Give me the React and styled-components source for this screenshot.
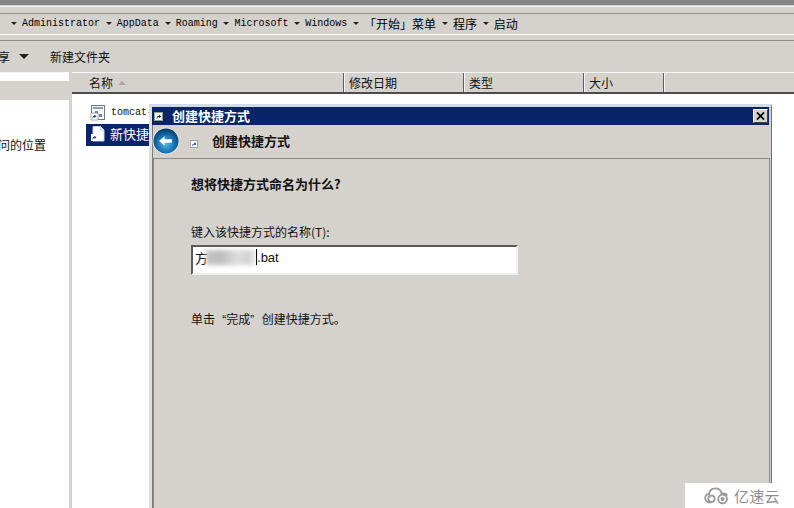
import React from 'react'
import styled, { createGlobalStyle } from 'styled-components'

const cjk = `"Noto Sans CJK SC", "Liberation Sans", sans-serif`
const face = '#d5d2cd'

const Global = createGlobalStyle`
  html, body { margin: 0; padding: 0; background: #fff; }
  * { box-sizing: border-box; }
`

const Page = styled.div`
  position: relative;
  width: 794px;
  height: 508px;
  overflow: hidden;
  display: flex;
  flex-direction: column;
  background: ${face};
  font-family: ${cjk};
  font-size: 12px;
  color: #111;
`

const TitleStrip = styled.div`
  height: 14px;
  flex: none;
  background: ${face};
  border-top: 5px solid #858585;
  border-bottom: 1px solid #8f8f8f;
  box-shadow: inset 0 1px 0 ${face}, inset 0 2px 0 #f4f4f4;
`

const AddressBar = styled.div`
  height: 21px;
  flex: none;
  display: flex;
  align-items: center;
  padding: 0 0 2px 11px;
  border-bottom: 1px solid #fbfbfb;
`

const Crumb = styled.span`
  font-family: ${p => (p.$cjk ? cjk : '"Liberation Mono", monospace')};
  font-size: ${p => (p.$cjk ? '12px' : '10px')};
  font-weight: 400;
  color: #000;
  white-space: nowrap;
  margin-right: 5.8px;
`

const Caret = styled.i`
  width: 0;
  height: 0;
  flex: none;
  margin-right: ${p => p.$after || 5}px;
  border-style: solid;
  border-width: ${p => (p.$big ? '5px 5px 0' : '3px 3px 0')};
  border-color: #222 transparent transparent;
`

const Toolbar = styled.div`
  height: 32px;
  flex: none;
  display: flex;
  align-items: center;
  margin-top: 5px;
  border-top: 1px solid #8f8f8f;
  font-size: 12px;
`

const ShareLabel = styled.span`
  margin-left: -2px;
  margin-right: 9px;
`

const Body = styled.div`
  flex: 1;
  display: flex;
  min-height: 0;
`

const LeftPane = styled.div`
  width: 69px;
  flex: none;
  display: flex;
  flex-direction: column;
  background: #fff;
  border-top: 1px solid #f7f7f7;
  overflow: hidden;
`

const LeftGap = styled.div`
  height: 8px;
  flex: none;
`

const LeftBand = styled.div`
  height: 19px;
  flex: none;
  background: ${face};
`

const LeftText = styled.div`
  margin: 36px 0 0 -14px;
  font-size: 12px;
  line-height: 18px;
  white-space: nowrap;
`

const RightPane = styled.div`
  flex: 1;
  margin-left: 3px;
  display: flex;
  flex-direction: column;
  background: #fff;
`

const HeaderRow = styled.div`
  height: 22px;
  flex: none;
  display: flex;
  background: ${face};
  border-top: 1px solid #f7f7f7;
  border-bottom: 2px solid #4c4c4c;
`

const HeaderCell = styled.div`
  width: ${p => p.$w}px;
  flex: none;
  display: flex;
  align-items: center;
  gap: 5px;
  padding-left: ${p => p.$pad || 5}px;
  border-right: 1px solid #5f5f5f;
  box-shadow: 1px 0 0 #f5f5f5;
  font-size: 12px;
`

const SortMark = styled.i`
  width: 0;
  height: 0;
  border-style: solid;
  border-width: 0 4px 4px;
  border-color: transparent transparent #a8a8a8;
`

const FileList = styled.div`
  padding: 9px 0 0 14px;
  display: flex;
  flex-direction: column;
  gap: 2px;
`

const FileRow = styled.div`
  height: ${p => (p.$selected ? 22 : 19)}px;
  display: flex;
  align-items: center;
  gap: ${p => (p.$selected ? 4 : 5)}px;
  padding: ${p => (p.$selected ? '0 0 3px 4px' : '0 0 0 4px')};
  white-space: nowrap;
  overflow: hidden;
  width: 70px;
  color: ${p => (p.$selected ? '#fff' : '#111')};
  background: ${p => (p.$selected ? '#0a246a' : 'transparent')};
  font-family: ${p => (p.$selected ? cjk : '"Liberation Mono", monospace')};
  font-size: ${p => (p.$selected ? 13 : 10)}px;

  svg {
    flex: none;
  }
`

const Dialog = styled.div`
  position: absolute;
  left: 149px;
  top: 104px;
  width: 623px;
  height: 420px;
  display: flex;
  flex-direction: column;
  background: ${face};
  border-style: solid;
  border-width: 3px 1px 0 3px;
  border-color: #d3dbe8 #6e6e6e #6e6e6e #dedede;
  box-shadow: inset 1px 0 0 #7c7c7c;
`

const DialogTitle = styled.div`
  height: 18px;
  flex: none;
  margin: 0 2px 0 0;
  display: flex;
  align-items: center;
  padding: 0 1px 0 2px;
  background: #0a246a;
  color: #fff;
  font-size: 13px;
  font-weight: 700;
`

const TitleText = styled.span`
  margin: 0 0 2px 9px;
  flex: 1;
`

const CloseButton = styled.button`
  width: 15px;
  height: 14px;
  padding: 0;
  display: flex;
  align-items: center;
  justify-content: center;
  background: ${face};
  border: 1px solid;
  border-color: #fff #404040 #404040 #fff;
`

const WizardHead = styled.div`
  height: 33px;
  flex: none;
  display: flex;
  align-items: center;
  padding-bottom: 2px;
  font-size: 13px;
  font-weight: 700;
`

const HeadText = styled.span`
  margin-left: 14px;
`

const SmallShortcut = styled.span`
  display: flex;
  margin-left: 10px;
  margin-top: 6px;
`

const Panel = styled.div`
  flex: 1;
  margin: 0 1px 0 1px;
  padding: 15px 0 0 37px;
  border-top: 1px solid #8a8a8a;
  border-left: 1px solid #8a8a8a;
  border-right: 1px solid #8a8a8a;
`

const Question = styled.div`
  font-size: 13px;
  font-weight: 700;
  line-height: 19px;
`

const NameLabel = styled.div`
  margin-top: 29px;
  font-size: 12px;
  line-height: 19px;
`

const NameInput = styled.div`
  width: 327px;
  height: 30px;
  margin-top: 4px;
  display: flex;
  align-items: center;
  padding: 0 0 6px 2px;
  background: #fff;
  border-style: solid;
  border-width: 2px;
  border-color: #5a5a5a #efefef #efefef #5a5a5a;
  font-family: "Liberation Sans", ${cjk};
  font-size: 13px;
  color: #111;
`

const Smudge = styled.span`
  width: 50px;
  height: 15px;
  flex: none;
  margin-left: -2px;
  background: linear-gradient(90deg, #c4c4c4 0%, #bdbdbd 30%, #dddddd 62%, #d2d2d2 85%, #eeeeee 100%);
  filter: blur(2px);
`

const InputCaret = styled.span`
  position: relative;
  z-index: 1;
  width: 1px;
  height: 16px;
  flex: none;
  background: #000;
`

const FinishHint = styled.div`
  margin-top: 36px;
  font-family: "Liberation Sans", ${cjk};
  font-size: 12px;
  line-height: 19px;
  word-spacing: 4px;
`

const Watermark = styled.div`
  position: absolute;
  right: 0;
  bottom: 0;
  width: 109px;
  height: 25px;
  display: flex;
  align-items: center;
  padding-left: 19px;
  gap: 4px;
  background: #fff;
  color: #8f8f8f;
  font-size: 15px;
  letter-spacing: 0.3px;
`

const BackBall = () => (
  <svg width="28" height="28" viewBox="0 0 28 28">
    <defs>
      <radialGradient id="ball" cx="50%" cy="62%" r="62%">
        <stop offset="0" stopColor="#58b6e6" />
        <stop offset="0.55" stopColor="#1573b6" />
        <stop offset="1" stopColor="#0a3760" />
      </radialGradient>
    </defs>
    <circle cx="14" cy="14" r="13.5" fill="#dfe6ea" />
    <circle cx="14" cy="14" r="12.5" fill="url(#ball)" />
    <path d="M7 14 L12.6 9.2 V12.2 H20 V15.8 H12.6 V18.8 Z" fill="#fff" />
  </svg>
)

const ShortcutBadge = ({ size = 9 }) => (
  <svg width={size} height={size} viewBox="0 0 9 9">
    <rect width="9" height="9" fill="#fff" />
    <rect x="0.5" y="0.5" width="8" height="8" fill="none" stroke="#9a9a9a" />
    <path d="M2.5 7 C2.5 4.5 3.5 3.8 5 3.8 V2.4 L7.4 4.4 L5 6.2 V5 C4 5 3.2 5.6 2.8 7 Z" fill="#12408e" />
  </svg>
)

const BatIcon = () => (
  <svg width="16" height="16" viewBox="0 0 16 16">
    <rect x="1.5" y="0.5" width="13" height="14" fill="#f4f6f8" stroke="#6d7a86" />
    <rect x="3" y="2" width="10" height="2" fill="#8aa0b4" />
    <path d="M5 6 h3 v3 h-3 z M9 9 h3 v3 h-3 z" fill="#7a8894" />
    <rect x="1" y="8" width="7" height="7" fill="#fff" stroke="#777" strokeWidth="0.6" />
    <path d="M2.5 13.5 C2.5 11.4 3.2 10.8 4.4 10.8 V9.7 L6.5 11.3 L4.4 12.9 V12 C3.6 12 3 12.5 2.8 13.5 Z" fill="#12408e" />
  </svg>
)

const NewFileIcon = () => (
  <svg width="16" height="16" viewBox="0 0 16 16">
    <path d="M3 0.5 H10.5 L14 4 V15 H3 Z" fill="#fff" stroke="#c8d2de" />
    <path d="M10.5 0.5 V4 H14" fill="#e6ebf2" stroke="#c8d2de" />
    <rect x="1" y="8" width="7" height="7" fill="#fff" />
    <path d="M2.5 13.5 C2.5 11.4 3.2 10.8 4.4 10.8 V9.7 L6.5 11.3 L4.4 12.9 V12 C3.6 12 3 12.5 2.8 13.5 Z" fill="#12408e" />
  </svg>
)

const CloudLogo = () => (
  <svg width="26" height="18" viewBox="0 0 26 18" fill="none" stroke="#979797" strokeWidth="1.8">
    <path d="M7 15.5 H6 C3 15.5 1.2 13.4 1.2 11 C1.2 8.6 3 7 5 7 C5.6 3.6 8.2 1.4 11.2 1.4 C14.4 1.4 17 3.6 17.6 6.6 C20 6 22 6.6 23.4 8.4" />
    <circle cx="7.5" cy="11.8" r="3.2" />
    <circle cx="18.6" cy="12" r="4.4" />
    <circle cx="18.6" cy="12" r="1.2" />
  </svg>
)

const crumbs = [
  { text: 'Administrator' },
  { text: 'AppData' },
  { text: 'Roaming' },
  { text: 'Microsoft' },
  { text: 'Windows' },
  { text: '「开始」菜单', cjk: true },
  { text: '程序', cjk: true },
  { text: '启动', cjk: true },
]

export default function App() {
  return (
    <Page>
      <Global />
      <TitleStrip />
      <AddressBar>
        {crumbs.map(c => (
          <React.Fragment key={c.text}>
            <Caret $after={5} />
            <Crumb $cjk={c.cjk}>{c.text}</Crumb>
          </React.Fragment>
        ))}
      </AddressBar>
      <Toolbar>
        <ShareLabel>享</ShareLabel>
        <Caret $big $after={21} />
        <span>新建文件夹</span>
      </Toolbar>
      <Body>
        <LeftPane>
          <LeftGap />
          <LeftBand />
          <LeftText>访问的位置</LeftText>
        </LeftPane>
        <RightPane>
          <HeaderRow>
            <HeaderCell $w={272} $pad={17}>名称<SortMark /></HeaderCell>
            <HeaderCell $w={120}>修改日期</HeaderCell>
            <HeaderCell $w={120}>类型</HeaderCell>
            <HeaderCell $w={80}>大小</HeaderCell>
          </HeaderRow>
          <FileList>
            <FileRow><BatIcon />tomcat-</FileRow>
            <FileRow $selected><NewFileIcon />新快捷方式</FileRow>
          </FileList>
        </RightPane>
      </Body>

      <Dialog>
        <DialogTitle>
          <ShortcutBadge />
          <TitleText>创建快捷方式</TitleText>
          <CloseButton aria-label="关闭">
            <svg width="9" height="8" viewBox="0 0 9 8">
              <path d="M1 0.5 L8 7.5 M8 0.5 L1 7.5" stroke="#000" strokeWidth="1.7" />
            </svg>
          </CloseButton>
        </DialogTitle>
        <WizardHead>
          <BackBall />
          <SmallShortcut><ShortcutBadge size={8} /></SmallShortcut>
          <HeadText>创建快捷方式</HeadText>
        </WizardHead>
        <Panel>
          <Question>想将快捷方式命名为什么?</Question>
          <NameLabel>键入该快捷方式的名称(T):</NameLabel>
          <NameInput>
            方<Smudge /><InputCaret />.bat
          </NameInput>
          <FinishHint>单击 “完成” 创建快捷方式。</FinishHint>
        </Panel>
      </Dialog>

      <Watermark>
        <CloudLogo />
        <span>亿速云</span>
      </Watermark>
    </Page>
  )
}
